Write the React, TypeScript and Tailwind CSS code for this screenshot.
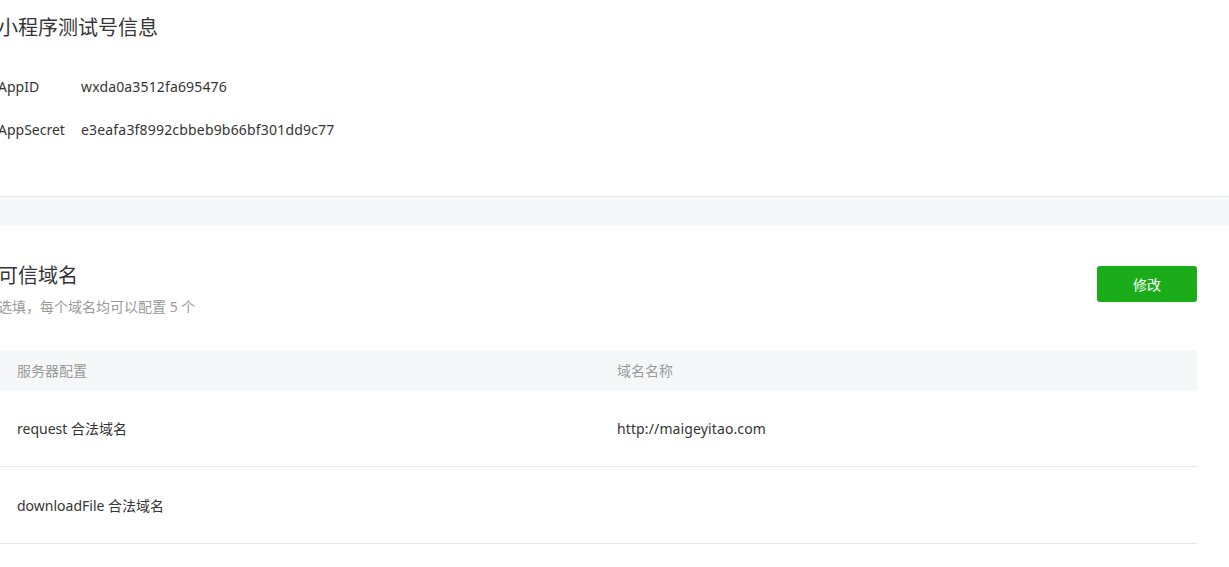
export default function App() {
  const font = { fontFamily: '"Segoe UI", "Noto Sans", "Noto Sans CJK SC", sans-serif' };
  return (
    <div className="w-[1229px] min-h-[567px] bg-white text-[#353535] overflow-hidden" style={font}>
      <section className="border-b border-[#e7e7eb] pb-[45px] pt-[14px]">
        <div className="-ml-[2px]">
          <h2 className="text-[20px] leading-[28px] font-normal">小程序测试号信息</h2>
          <div className="mt-[23px] text-[14px]">
            <div className="flex h-[43px] items-center">
              <span className="w-[83px]">AppID</span>
              <span className="tracking-[0.15px]">wxda0a3512fa695476</span>
            </div>
            <div className="flex h-[43px] items-center">
              <span className="w-[83px]">AppSecret</span>
              <span className="tracking-[0.18px]">e3eafa3f8992cbbeb9b66bf301dd9c77</span>
            </div>
          </div>
        </div>
      </section>
      <div className="h-[29px] bg-[#f6f7f9]" />
      <section className="pt-[36px] pr-[32px]">
        <div className="-ml-[2px]">
          <div className="flex items-start justify-between">
            <div>
              <h2 className="text-[20px] leading-[28px] font-normal">可信域名</h2>
              <p className="mt-[7px] text-[14px] leading-[20px] text-[#9a9a9a]">选填，每个域名均可以配置 5 个</p>
            </div>
            <button className="mt-[4px] h-[36px] w-[100px] rounded-[3px] bg-[#1aad19] text-[14px] text-white">修改</button>
          </div>
          <div className="mt-[33px] text-[14px]">
            <div className="grid h-[41px] grid-cols-[600px_1fr] items-center bg-[#f6f7f9] text-[#9a9a9a]">
              <div className="pl-[19px]">服务器配置</div>
              <div className="pl-[19px]">域名名称</div>
            </div>
            <div className="grid h-[76px] grid-cols-[600px_1fr] items-center border-b border-[#e7e7eb]">
              <div className="pl-[19px]">request 合法域名</div>
              <div className="pl-[19px] tracking-[0.12px]">http://maigeyitao.com</div>
            </div>
            <div className="grid h-[77px] grid-cols-[600px_1fr] items-center border-b border-[#e7e7eb]">
              <div className="pl-[19px]">downloadFile 合法域名</div>
              <div className="pl-[19px]"></div>
            </div>
          </div>
        </div>
      </section>
    </div>
  );
}
